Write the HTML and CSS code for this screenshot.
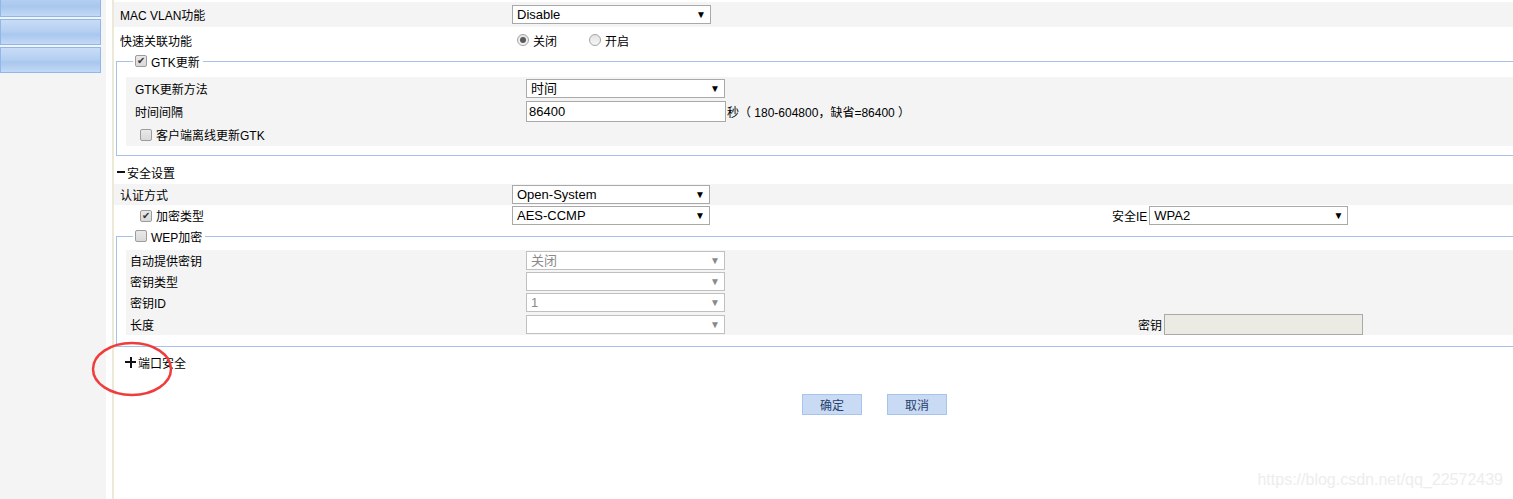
FILE: index.html
```html
<!DOCTYPE html>
<html lang="zh-CN">
<head>
    <meta charset="UTF-8">
    <title>无线安全设置</title>
    <link rel="stylesheet" href="styles.css">
</head>
<body>
    <div class="page">
        <div class="sidebar">
            <div class="nav-btn first"></div>
            <div class="nav-btn"></div>
            <div class="nav-btn"></div>
        </div>
        <div class="gap"></div>
        <div class="divider"></div>

        <div class="main">
            <div class="row grey r1">
                <div class="label">MAC VLAN功能</div>
                <span class="sel"><select><option>Disable</option></select></span>
            </div>
            <div class="row r2">
                <div class="label">快速关联功能</div>
                <label class="radio-item"><span class="radio checked"></span>关闭</label>
                <label class="radio-item second"><span class="radio"></span>开启</label>
            </div>

            <fieldset class="box gtk">
                <legend><span class="cb checked"></span>GTK更新</legend>
                <div class="inner">
                    <div class="row h22">
                        <div class="label">GTK更新方法</div>
                        <span class="sel"><select><option>时间</option></select></span>
                    </div>
                    <div class="row h24">
                        <div class="label">时间间隔</div>
                        <input class="text" type="text" value="86400">
                        <span class="hint">秒（ 180-604800，缺省=86400 ）</span>
                    </div>
                    <div class="row h23">
                        <div class="label check"><span class="cb"></span>客户端离线更新GTK</div>
                    </div>
                </div>
            </fieldset>

            <div class="section-title"><span class="minus"></span>安全设置</div>
            <div class="row grey h21">
                <div class="label">认证方式</div>
                <span class="sel w198"><select><option>Open-System</option></select></span>
            </div>
            <div class="row h21">
                <div class="label check"><span class="cb checked"></span>加密类型</div>
                <div class="value">
                    <span class="sel w198"><select><option>AES-CCMP</option></select></span>
                </div>
                <span class="label-right">安全IE</span>
                <span class="sel"><select><option>WPA2</option></select></span>
            </div>

            <fieldset class="box wep">
                <legend><span class="cb"></span>WEP加密</legend>
                <div class="inner">
                    <div class="row h21">
                        <div class="label">自动提供密钥</div>
                        <span class="sel off"><select disabled><option>关闭</option></select></span>
                    </div>
                    <div class="row h21">
                        <div class="label">密钥类型</div>
                        <span class="sel off"><select disabled><option></option></select></span>
                    </div>
                    <div class="row h21">
                        <div class="label">密钥ID</div>
                        <span class="sel off"><select disabled><option>1</option></select></span>
                    </div>
                    <div class="row h22">
                        <div class="label">长度</div>
                        <div class="value">
                            <span class="sel off"><select disabled><option></option></select></span>
                        </div>
                        <span class="label-right">密钥</span>
                        <input class="text key" type="text" disabled>
                    </div>
                </div>
            </fieldset>

            <div class="section-title port"><span class="plus"></span>端口安全</div>

            <div class="buttons">
                <button class="btn">确定</button>
                <button class="btn">取消</button>
            </div>
        </div>
    </div>

    <svg class="mark" width="84" height="60" viewBox="0 0 84 60">
        <ellipse cx="41" cy="29" rx="39" ry="26" fill="none" stroke="#f03c3c" stroke-width="2.5"/>
    </svg>
    <div class="watermark">https://blog.csdn.net/qq_22572439</div>
</body>
</html>
```

FILE: styles.css
```css
* {
    box-sizing: border-box;
}

html, body {
    margin: 0;
    height: 100%;
}

body {
    font-family: "Liberation Sans", "Noto Sans CJK SC", sans-serif;
    font-size: 12px;
    color: #000;
    background: #fff;
    overflow: hidden;
}

.page {
    display: flex;
    height: 100%;
}

.sidebar {
    width: 106px;
    flex: none;
    background: #f4f4f4;
}

.nav-btn {
    width: 101px;
    height: 26px;
    margin-bottom: 2px;
    border: 1px solid #8fb7ea;
    background: linear-gradient(#c8dcf7, #b6d0f1 45%, #a9c7ee 60%, #c3d9f6);
}

.nav-btn.first {
    height: 17px;
    border-top: none;
    background: linear-gradient(#b4cff1, #a9c7ee 40%, #c3d9f6);
}

.gap {
    width: 6px;
    flex: none;
}

.divider {
    width: 2px;
    flex: none;
    background: #ece9d8;
}

.main {
    flex: 1;
    padding-top: 2px;
}

.row {
    display: flex;
    align-items: center;
    height: 25px;
}

.row.grey {
    background: #f4f4f4;
}

.r2 {
    height: 26px;
}

.h21 { height: 21px; }
.h22 { height: 22px; }
.h23 { height: 23px; }
.h24 { height: 24px; }

.label {
    width: 398px;
    flex: none;
    padding-left: 6px;
    display: flex;
    align-items: center;
}

.label.check {
    padding-left: 26px;
}

.value {
    width: 600px;
    flex: none;
}

.label-right {
    margin-right: 2px;
}

/* select boxes */
.sel {
    position: relative;
    display: inline-block;
    width: 199px;
    height: 19px;
}

.sel.w198 {
    width: 198px;
}

.sel select {
    appearance: none;
    -webkit-appearance: none;
    width: 100%;
    height: 100%;
    margin: 0;
    padding: 0 0 0 4px;
    border: 1px solid #a9a9a9;
    border-radius: 0;
    background: #fff;
    color: #000;
    font-family: "Liberation Sans", "Noto Sans CJK SC", sans-serif;
    font-size: 13px;
}

.sel::after {
    content: "▼";
    position: absolute;
    right: 5px;
    top: 4px;
    font-size: 10px;
    line-height: 11px;
    color: #000;
    pointer-events: none;
}

.sel.off select {
    border-color: #c0c0c0;
    color: #8a8a8a;
    opacity: 1;
}

.sel.off::after {
    color: #8a8a8a;
}

/* radios and checkboxes */
.radio-item {
    display: flex;
    align-items: center;
    margin-left: 5px;
}

.radio-item.second {
    margin-left: 32px;
}

.radio {
    width: 12px;
    height: 12px;
    margin-right: 4px;
    border: 1px solid #a3a3a3;
    border-radius: 50%;
    background: linear-gradient(#e4e4e4, #f6f6f6);
    display: flex;
    align-items: center;
    justify-content: center;
}

.radio.checked::after {
    content: "";
    width: 6px;
    height: 6px;
    border-radius: 50%;
    background: #5a5a5a;
}

.cb {
    width: 12px;
    height: 12px;
    margin-right: 4px;
    border: 1px solid #9c9c9c;
    border-radius: 2px;
    background: linear-gradient(#e9e9e9, #d9d9d9);
    display: inline-flex;
    align-items: center;
    justify-content: center;
    flex: none;
}

.cb.checked::after {
    content: "✔";
    font-size: 10px;
    line-height: 10px;
    color: #333;
}

/* fieldsets */
.box {
    margin: 1px 0 0 2px;
    padding: 0 0 9px 9px;
    border: 1px solid #a6c2ec;
    border-right: none;
    min-width: 0;
}

.box legend {
    display: flex;
    align-items: center;
    height: 14px;
    margin-left: 7px;
    padding: 0 3px 0 2px;
}

.inner {
    margin-top: 9px;
    background: #f4f4f4;
}

.inner .label {
    width: 400px;
    padding-left: 9px;
}

.inner .label.check {
    padding-left: 14px;
}

.wep {
    margin-top: 3px;
    padding-bottom: 11px;
}

.wep .inner {
    margin-top: 7px;
}

.wep .inner .label {
    padding-left: 4px;
}

.wep .value {
    width: 612px;
}

.text {
    width: 200px;
    height: 21px;
    margin: 0;
    padding: 0 2px;
    border: 1px solid #a9a9a9;
    background: #fff;
    font-family: "Liberation Sans", sans-serif;
    font-size: 13px;
    color: #000;
}

.text.key {
    width: 199px;
    background: #ebebe4;
}

.hint {
    margin-left: 1px;
}

/* section headings */
.section-title {
    display: flex;
    align-items: center;
    height: 20px;
    margin: 6px 0 2px;
}

.minus {
    width: 8px;
    height: 2px;
    margin: 0 2px 0 3px;
    background: #111;
}

.section-title.port {
    margin-top: 5px;
}

.plus {
    position: relative;
    width: 11px;
    height: 11px;
    margin: 0 2px 0 11px;
}

.plus::before,
.plus::after {
    content: "";
    position: absolute;
    background: #111;
}

.plus::before {
    left: 0;
    top: 4.5px;
    width: 11px;
    height: 2px;
}

.plus::after {
    left: 4.5px;
    top: 0;
    width: 2px;
    height: 11px;
}

.buttons {
    display: flex;
    gap: 25px;
    margin-top: 22px;
    padding-left: 688px;
}

.btn {
    width: 60px;
    height: 21px;
    padding: 0;
    border: 1px solid #a9c4ea;
    background: #c9daf5;
    color: #253e69;
    font-family: "Liberation Sans", "Noto Sans CJK SC", sans-serif;
    font-size: 12px;
}

.mark {
    position: absolute;
    left: 91px;
    top: 340px;
}

.watermark {
    position: absolute;
    right: 10px;
    bottom: 10px;
    font-size: 16px;
    color: #ededed;
}
```
